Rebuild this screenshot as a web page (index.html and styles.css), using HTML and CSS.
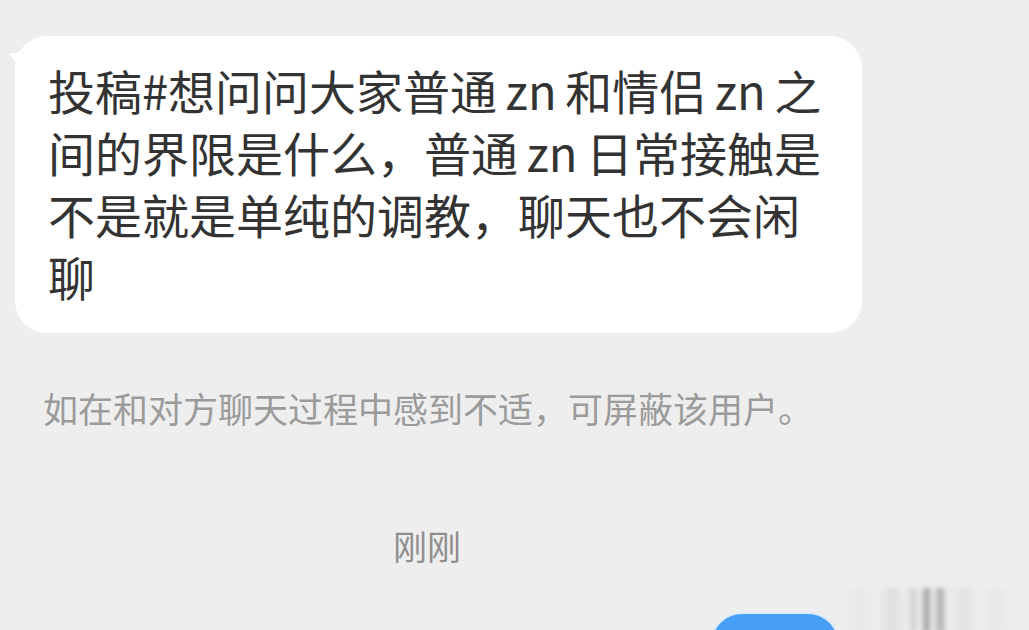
FILE: index.html
```html
<!DOCTYPE html>
<html lang="zh-CN">
<head>
<meta charset="utf-8">
<link rel="stylesheet" href="styles.css">
</head>
<body>
<div class="chat">
  <div class="msg-in">
    <svg class="tail" width="40" height="50" viewBox="0 0 40 50"><path d="M40 6 C28 8 14 12 4 14 C12 22 18 32 20 50 L40 50 Z" fill="#ffffff"/></svg>
    <div class="bubble">
      <span class="line">投稿#想问问大家普通 zn 和情侣 zn 之</span>
      <span class="line">间的界限是什么，普通 zn 日常接触是</span>
      <span class="line">不是就是单纯的调教，聊天也不会闲</span>
      <span class="line">聊</span>
    </div>
  </div>
  <p class="notice">如在和对方聊天过程中感到不适，可屏蔽该用户。</p>
  <p class="time">刚刚</p>
  <div class="msg-out">
    <div class="bubble-out"></div>
    <div class="mark"></div>
  </div>
</div>
</body>
</html>
```
FILE: styles.css
```css
html, body {
  margin: 0;
  padding: 0;
}
body {
  background: #eeeeee;
  font-family: "Noto Sans CJK SC", "Noto Sans", sans-serif;
  width: 1029px;
  height: 630px;
  overflow: hidden;
}
.chat {
  padding-top: 36px;
}
.msg-in {
  position: relative;
  margin-left: 15px;
  width: 847px;
}
.tail {
  position: absolute;
  left: -10px;
  top: 4px;
}
.bubble {
  position: relative;
  background: #ffffff;
  border-radius: 32px;
  padding: 23px 20px 26px 33px;
  color: #333333;
  font-size: 47px;
  line-height: 62px;
  word-spacing: -2px;
}
.line {
  display: block;
  white-space: nowrap;
}
.notice {
  margin: 50px 0 0 43px;
  font-size: 35px;
  line-height: 50px;
  color: #9b9b9b;
}
.time {
  margin: 88px 0 0 393px;
  font-size: 34px;
  line-height: 50px;
  color: #8e8e8e;
}
.msg-out {
  display: flex;
  align-items: flex-start;
  margin-top: 43px;
  margin-left: 712px;
}
.bubble-out {
  width: 126px;
  height: 60px;
  background: #47a0f6;
  border-radius: 30px;
  box-shadow: 0 0 0 2px #dcecfb;
}
.mark {
  width: 170px;
  height: 44px;
  margin-left: 4px;
  margin-top: -26px;
  background:
    linear-gradient(90deg, transparent 0, #e4e4e4 10%, transparent 20%, #d0d0d0 30%, transparent 38%, #b8b8b8 42%, transparent 46%, #5a5a5a 50%, transparent 53%, #7a7a7a 58%, transparent 62%, #d6d6d6 72%, transparent 80%, #e2e2e2 90%, transparent 100%);
  opacity: 0.55;
  filter: blur(2px);
}
```
